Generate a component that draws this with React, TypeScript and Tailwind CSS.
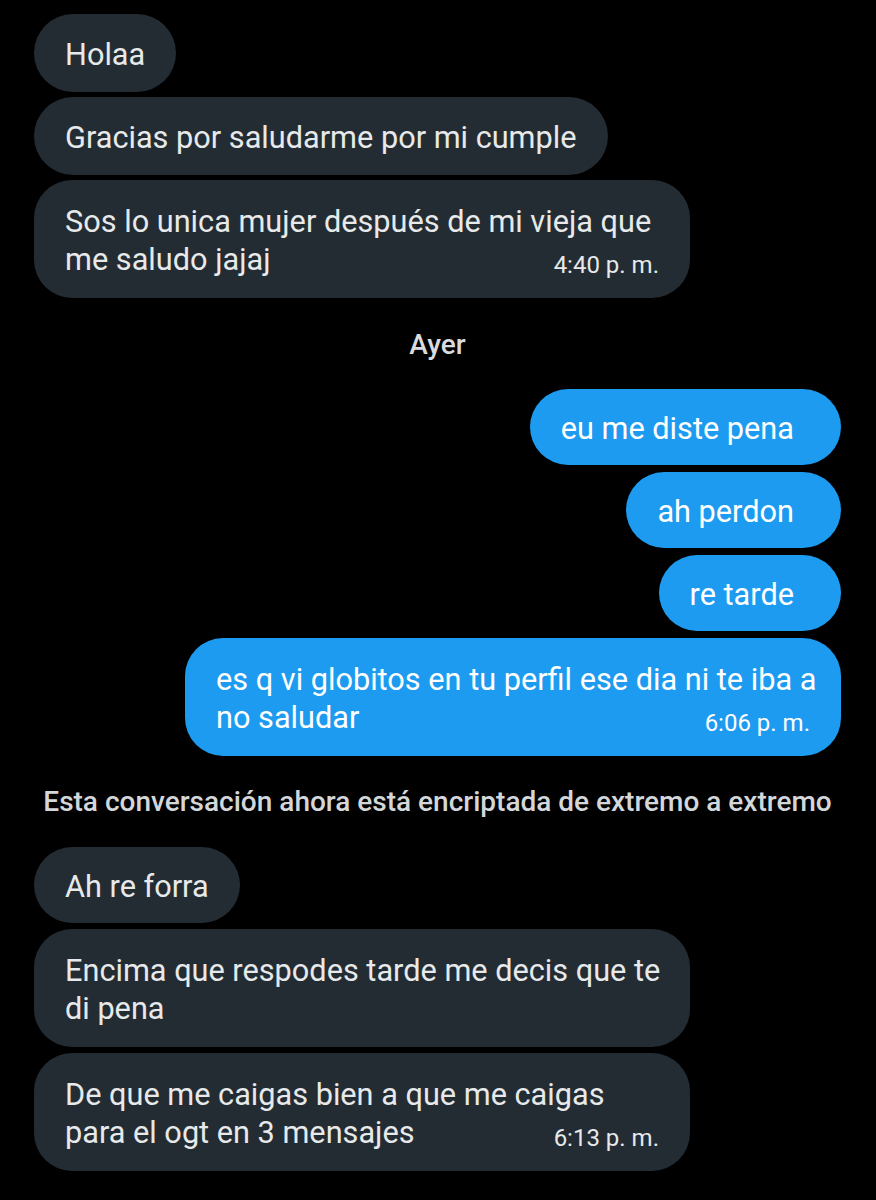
import React from 'react';

type Msg = {
  lines: string[];
  time?: string;
};

const received: Msg[] = [
  { lines: ['Holaa'] },
  { lines: ['Gracias por saludarme por mi cumple'] },
  { lines: ['Sos lo unica mujer después de mi vieja que', 'me saludo jajaj'], time: '4:40 p. m.' },
];

const sent: Msg[] = [
  { lines: ['eu me diste pena'] },
  { lines: ['ah perdon'] },
  { lines: ['re tarde'] },
  { lines: ['es q vi globitos en tu perfil ese dia ni te iba a', 'no saludar'], time: '6:06 p. m.' },
];

const later: Msg[] = [
  { lines: ['Ah re forra'] },
  { lines: ['Encima que respodes tarde me decis que te', 'di pena'] },
  { lines: ['De que me caigas bien a que me caigas', 'para el ogt en 3 mensajes'], time: '6:13 p. m.' },
];

const Bubble = ({ msg, mine, tall }: { msg: Msg; mine?: boolean; tall?: boolean }) => {
  const multi = msg.lines.length > 1;
  const color = mine ? 'bg-[#1d9bf0] text-white' : 'bg-[#242c33] text-[#e7e9ea]';
  // wrapped messages fill the max width, short ones hug their text
  const pad = multi
    ? 'w-[656px] pt-[23px] pb-[19px] rounded-[38px] pr-[31px]'
    : tall
      ? 'pt-[22px] pb-[18px] rounded-full pr-[31px]'
      : mine
        ? 'pt-[21px] pb-[17px] rounded-full pr-[47px]'
        : 'pt-[21px] pb-[17px] rounded-full pr-[31px]';
  return (
    <div className={`${color} ${pad} pl-[31px] text-[30.7px] leading-[38px]`}>
      {msg.lines.map((line, i) => {
        const last = i === msg.lines.length - 1;
        if (last && msg.time) {
          return (
            <div key={i} className="flex items-end justify-between gap-6">
              <span className="whitespace-nowrap">{line}</span>
              <span className="text-[24px] leading-[28px] whitespace-nowrap">{msg.time}</span>
            </div>
          );
        }
        return (
          <div key={i} className="whitespace-nowrap">
            {line}
          </div>
        );
      })}
    </div>
  );
};

export default function App() {
  return (
    <div
      className="min-h-[1200px] w-[876px] bg-black pl-[34px] pr-[35px] pt-[14px]"
      style={{ fontFamily: 'Roboto, "Noto Sans", sans-serif' }}
    >
      <div className="flex flex-col items-start gap-[5px]">
        {received.map((m, i) => (
          <Bubble key={i} msg={m} tall />
        ))}
      </div>

      <div className="mt-[31px] mb-[28px] text-center text-[28px] leading-[32px] font-medium text-[#d9dcde]">
        Ayer
      </div>

      <div className="flex flex-col items-end gap-[7px]">
        {sent.map((m, i) => (
          <Bubble key={i} msg={m} mine />
        ))}
      </div>

      <div className="mt-[30px] mb-[29px] text-center text-[28px] leading-[32px] font-medium text-[#d3d7da] whitespace-nowrap">
        Esta conversación ahora está encriptada de extremo a extremo
      </div>

      <div className="flex flex-col items-start gap-[6px]">
        {later.map((m, i) => (
          <Bubble key={i} msg={m} />
        ))}
      </div>
    </div>
  );
}
